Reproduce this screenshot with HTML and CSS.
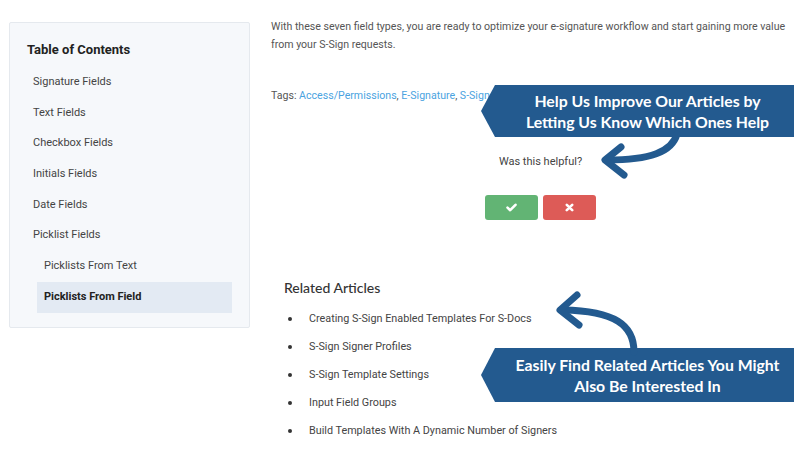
FILE: index.html
```html
<!DOCTYPE html>
<html lang="en">
<head>
  <meta charset="UTF-8" />
  <title>S-Sign Field Types</title>
  <link rel="stylesheet" href="styles.css">
</head>
<body>
  <div class="page">
    <aside class="toc">
      <h3 class="toc-title">Table of Contents</h3>
      <ul class="toc-list">
        <li>Signature Fields</li>
        <li>Text Fields</li>
        <li>Checkbox Fields</li>
        <li>Initials Fields</li>
        <li>Date Fields</li>
        <li>Picklist Fields</li>
        <li class="sub">Picklists From Text</li>
        <li class="sub active">Picklists From Field</li>
      </ul>
    </aside>

    <main class="article">
      <p class="lead">With these seven field types, you are ready to optimize your e-signature workflow and start gaining more value from your S-Sign requests.</p>

      <p class="tags">Tags: <a href="#">Access/Permissions</a>, <a href="#">E-Signature</a>, <a href="#">S-Sign</a></p>

      <div class="feedback">
        <p class="feedback-q">Was this helpful?</p>
        <div class="feedback-btns">
          <button class="btn btn-yes" type="button">
            <svg width="11" height="9" viewBox="0 0 11 9"><path d="M1.5 4.6 L4.2 7.2 L9.5 1.8" fill="none" stroke="#fff" stroke-width="2.6" stroke-linecap="round" stroke-linejoin="round"/></svg>
          </button>
          <button class="btn btn-no" type="button">
            <svg width="9" height="9" viewBox="0 0 9 9"><path d="M1.8 1.8 L7.2 7.2 M7.2 1.8 L1.8 7.2" fill="none" stroke="#fff" stroke-width="2.6" stroke-linecap="round"/></svg>
          </button>
        </div>
      </div>

      <section class="related">
        <h4 class="related-title">Related Articles</h4>
        <ul class="related-list">
          <li>Creating S-Sign Enabled Templates For S-Docs</li>
          <li>S-Sign Signer Profiles</li>
          <li>S-Sign Template Settings</li>
          <li>Input Field Groups</li>
          <li>Build Templates With A Dynamic Number of Signers</li>
        </ul>
      </section>
    </main>
  </div>

  <!-- callouts laid over the page -->
  <div class="callout callout-top">Help Us Improve Our Articles by<br>Letting Us Know Which Ones Help</div>
  <div class="callout callout-bottom">Easily Find Related Articles You Might<br>Also Be Interested In</div>
  <svg class="arrows" width="794" height="450" viewBox="0 0 794 450">
    <g fill="none" stroke="#235a8f" stroke-width="7" stroke-linecap="round" stroke-linejoin="round">
      <path d="M677 134 C672 152 650 160 607 160"/>
      <path d="M621 147 L605 160 L624 175"/>
      <path d="M634 352 C634 325 615 311 563 310"/>
      <path d="M577 295 L560 310 L579 325"/>
    </g>
  </svg>
</body>
</html>
```

FILE: styles.css
```css
body { margin: 0; width: 794px; height: 450px; overflow: hidden; position: relative; background: #fff; font-family: Roboto, "Liberation Sans", sans-serif; color: #555; }
ul { list-style: none; margin: 0; padding: 0; }
p { margin: 0; }

.page { display: flex; align-items: flex-start; gap: 21px; padding: 18px 0 0 9px; }

/* sidebar */
.toc { flex: 0 0 241px; box-sizing: border-box; margin-top: 4px; padding: 17px 17px 14px 17px; background: #f6f8fb; border: 1px solid #e5e9ee; border-radius: 2px; }
.toc-title { margin: 0 0 7px; font-size: 13px; line-height: 20px; font-weight: 700; color: #222; }
.toc-list li { height: 30.7px; line-height: 30.7px; padding-left: 6px; font-size: 11px; color: #444; }
.toc-list .sub { margin-left: 10px; padding-left: 7px; }
.toc-list .active { background: #e3eaf3; font-weight: 700; color: #222; }

/* article column */
.article { width: 530px; flex: none; }
.lead { font-size: 10.6px; line-height: 18px; color: #555; }
.tags { margin-top: 33px; font-size: 10.6px; line-height: 18px; color: #555; }
.tags a { color: #4aa3df; text-decoration: none; }

.feedback { display: flex; flex-direction: column; align-items: center; margin-top: 50px; padding-left: 9px; }
.feedback-q { font-size: 11px; line-height: 14px; color: #444; }
.feedback-btns { display: flex; gap: 5px; margin-top: 26px; }
.btn { width: 53px; height: 25px; border: 0; border-radius: 3px; display: flex; align-items: center; justify-content: center; padding: 0; }
.btn-yes { background: #62b474; }
.btn-no { background: #dd5b57; }

.related { margin-top: 59px; padding-left: 13px; }
.related-title { margin: 0 0 8px; font-family: Lato, "Open Sans", sans-serif; font-size: 14px; line-height: 18px; font-weight: 500; color: #333; }
.related-list li { position: relative; padding-left: 25px; height: 28px; line-height: 28px; font-size: 10.8px; color: #444; }
.related-list li::before { content: ""; position: absolute; left: 4px; top: 12px; width: 4px; height: 4px; border-radius: 50%; background: #333; }

/* callouts */
.callout { position: absolute; left: 481px; width: 313px; box-sizing: border-box; padding-left: 20px; background: #235a8f; color: #fff; text-align: center; font-family: Lato, "Open Sans", sans-serif; font-weight: 700; font-size: 15.8px; line-height: 21px; clip-path: polygon(14px 0, 100% 0, 100% 100%, 14px 100%, 0 50%); }
.callout-top { top: 85px; height: 52px; padding-top: 5px; }
.callout-bottom { top: 348px; height: 54px; padding-top: 6px; }
.arrows { position: absolute; left: 0; top: 0; pointer-events: none; }
```
